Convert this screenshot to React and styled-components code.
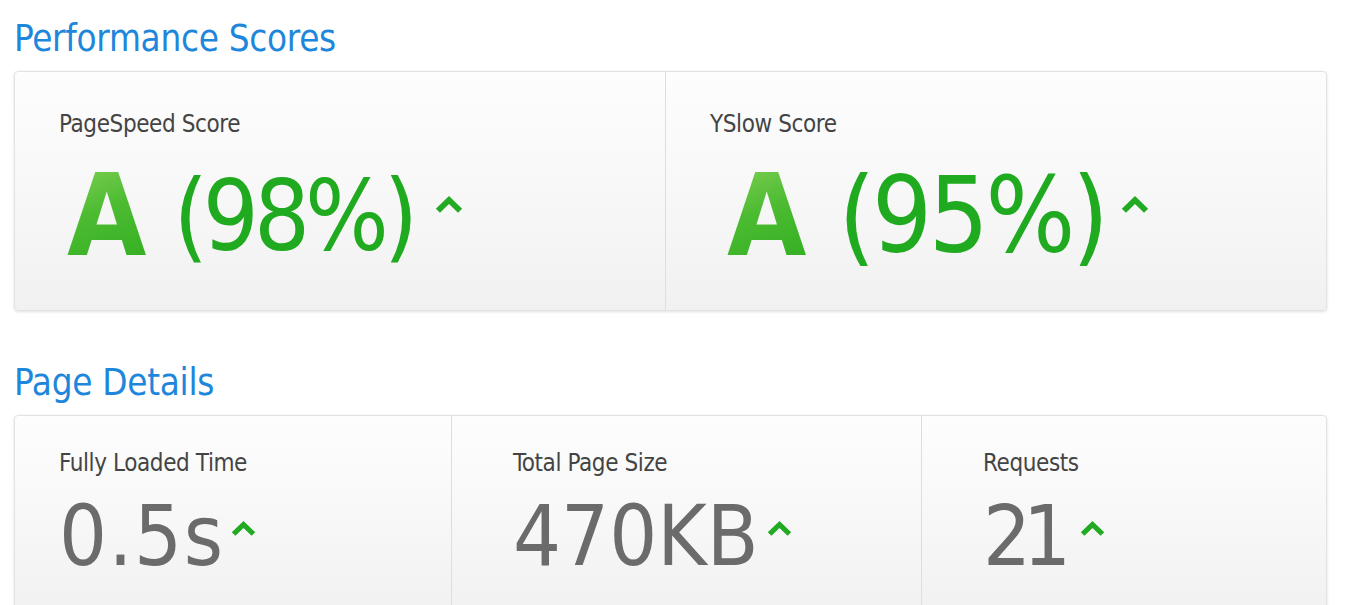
import React from 'react';
import styled, { createGlobalStyle } from 'styled-components';

const GlobalStyle = createGlobalStyle`
  html, body {
    margin: 0;
    padding: 0;
    background: #fff;
  }
  body {
    font-family: "DejaVu Sans Condensed", "DejaVu Sans", sans-serif;
    font-stretch: condensed;
  }
`;

const Page = styled.main`
  padding: 17px 28px 0 14px;
  width: 1313px;
`;

const SectionTitle = styled.h2`
  margin: 0 0 ${(p) => p.$gap}px;
  font-size: 36.5px;
  font-weight: normal;
  line-height: 43px;
  color: #1e87db;
  letter-spacing: -0.3px;
`;

const Card = styled.section`
  display: grid;
  grid-template-columns: ${(p) => p.$columns};
  height: ${(p) => p.$height}px;
  margin-bottom: ${(p) => p.$after}px;
  border: 1px solid #e2e2e2;
  border-radius: 4px;
  background: linear-gradient(#fdfdfd 0%, #f9f9f9 40%, #f1f1f1 100%);
  box-shadow: 0 1px 3px rgba(0, 0, 0, 0.12);
  overflow: hidden;
`;

const Cell = styled.div`
  padding: ${(p) => p.$top}px 0 0 ${(p) => p.$pad}px;
  border-left: ${(p) => (p.$first ? 'none' : '1px solid #dedede')};
`;

const Label = styled.div`
  font-size: 24px;
  line-height: 28px;
  color: #444;
  letter-spacing: -0.4px;
`;

const Value = styled.div`
  display: flex;
  align-items: center;
  margin: ${(p) => p.$top}px 0 0 ${(p) => p.$indent}px;
  line-height: 1;
`;

const Grade = styled.span`
  font-size: 114px;
  font-weight: bold;
  font-stretch: normal;
  background: linear-gradient(160deg, #86d159 0%, #4cbb31 45%, #2fae1f 100%);
  -webkit-background-clip: text;
  background-clip: text;
  color: transparent;
  margin-right: ${(p) => p.$gap}px;
`;

const Percent = styled.span`
  font-size: ${(p) => p.$size}px;
  color: #20aa20;
  letter-spacing: ${(p) => p.$track}px;
`;

const Figure = styled.span`
  font-size: 84px;
  color: #6b6b6b;
  letter-spacing: ${(p) => p.$track}px;
`;

const Caret = styled.svg`
  width: ${(p) => p.$w}px;
  height: ${(p) => p.$h}px;
  margin-left: ${(p) => p.$gap}px;
  align-self: flex-start;
  margin-top: ${(p) => p.$drop}px;
  flex: none;
`;

// small green "trend up" chevron shown after each metric
const Up = ({ w, h, gap, drop }) => (
  <Caret viewBox="0 0 24 16" preserveAspectRatio="none" $w={w} $h={h} $gap={gap} $drop={drop}>
    <path d="M2.5 14 L12 4.5 L21.5 14" fill="none" stroke="#22ab22" strokeWidth="5" />
  </Caret>
);

const scores = [
  { label: 'PageSpeed Score', pct: '(98%)', indent: 8, gap: 27, size: 98, track: -5, caretGap: 22 },
  { label: 'YSlow Score', pct: '(95%)', indent: 17, gap: 32, size: 105, track: -3.3, caretGap: 15 },
];

const details = [
  { label: 'Fully Loaded Time', value: '0.5s', pad: 44, track: 1.5, caretGap: 6 },
  { label: 'Total Page Size', value: '470KB', pad: 61, track: 0, caretGap: 8 },
  { label: 'Requests', value: '21', pad: 61, track: -8, caretGap: 17 },
];

export default function App() {
  return (
    <>
      <GlobalStyle />
      <Page>
        <SectionTitle $gap={11}>Performance Scores</SectionTitle>
        <Card $columns="650px 1fr" $height={238} $after={50}>
          {scores.map((s, i) => (
            <Cell key={s.label} $top={38} $pad={44} $first={i === 0}>
              <Label>{s.label}</Label>
              <Value $top={21} $indent={s.indent}>
                <Grade $gap={s.gap}>A</Grade>
                <Percent $size={s.size} $track={s.track}>{s.pct}</Percent>
                <Up w={28} h={18} gap={s.caretGap} drop={36} />
              </Value>
            </Cell>
          ))}
        </Card>

        <SectionTitle $gap={11}>Page Details</SectionTitle>
        <Card $columns="436px 470px 1fr" $height={200} $after={0}>
          {details.map((d, i) => (
            <Cell key={d.label} $top={33} $pad={d.pad} $first={i === 0}>
              <Label>{d.label}</Label>
              <Value $top={17} $indent={0}>
                <Figure $track={d.track}>{d.value}</Figure>
                <Up w={25} h={16} gap={d.caretGap} drop={26} />
              </Value>
            </Cell>
          ))}
        </Card>
      </Page>
    </>
  );
}
